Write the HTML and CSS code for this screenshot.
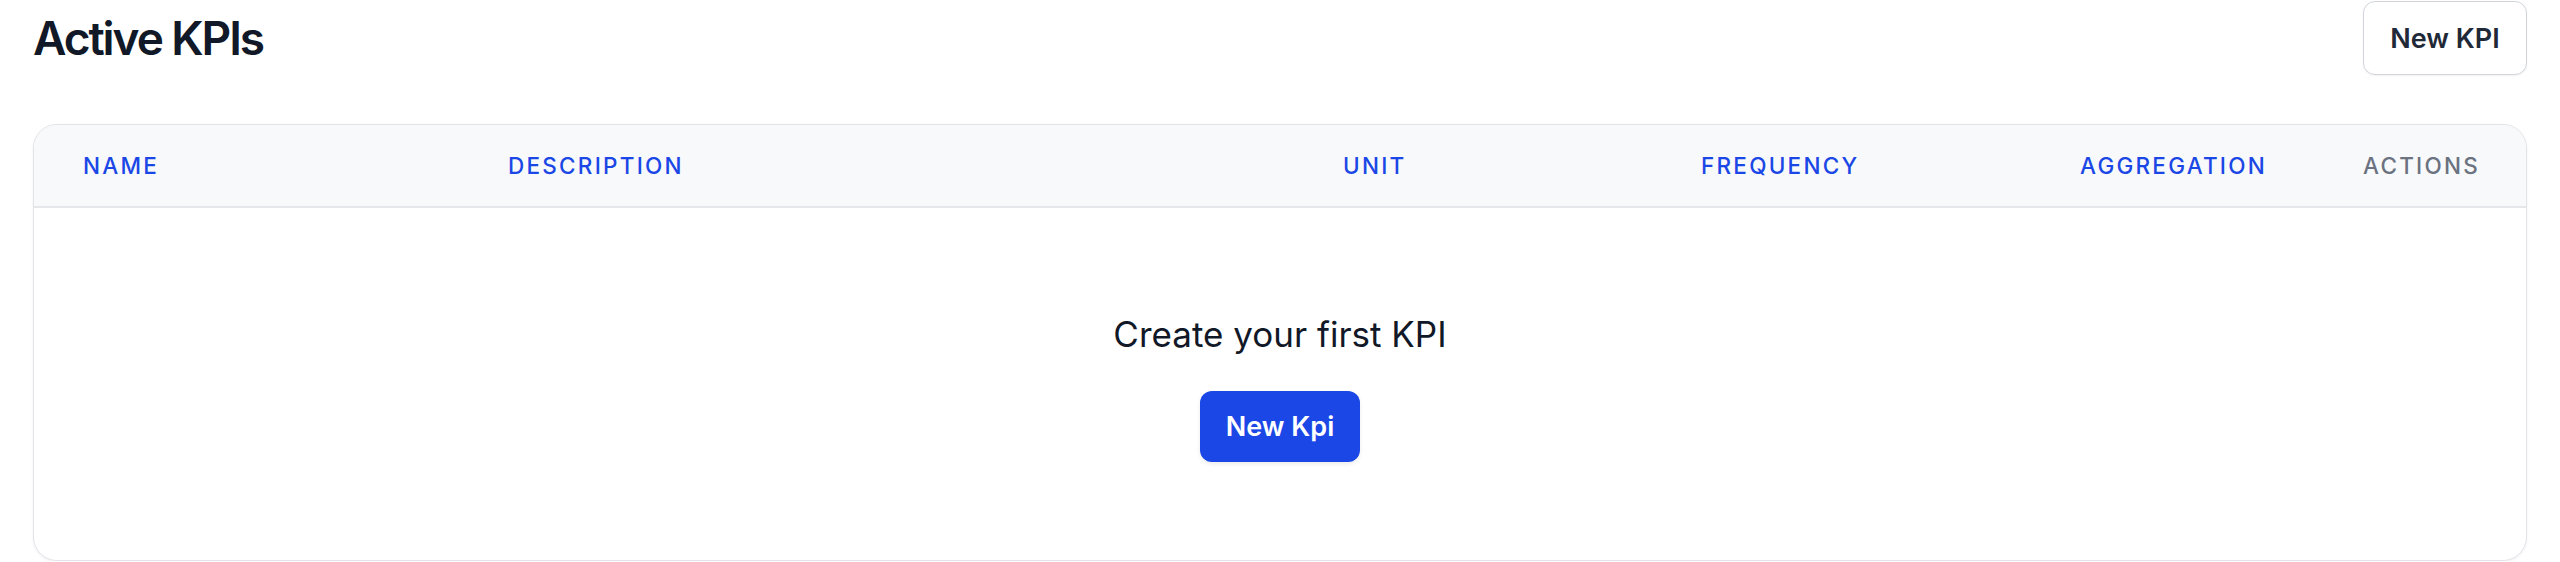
FILE: index.html
```html
<!DOCTYPE html>
<html lang="en">
<head>
<meta charset="utf-8">
<title>Active KPIs</title>
<link rel="stylesheet" href="styles.css">
</head>
<body>
<main class="page">
  <header class="topbar">
    <h1 class="title">Active KPIs</h1>
    <button class="btn-outline" type="button">New KPI</button>
  </header>
  <section class="card">
    <div class="thead">
      <div class="th">Name</div>
      <div class="th">Description</div>
      <div class="th">Unit</div>
      <div class="th">Frequency</div>
      <div class="th">Aggregation</div>
      <div class="th th-muted">Actions</div>
    </div>
    <div class="empty">
      <p class="empty-text">Create your first KPI</p>
      <button class="btn-primary" type="button">New Kpi</button>
    </div>
  </section>
</main>
</body>
</html>
```

FILE: styles.css
```css
* { box-sizing: border-box; }
html, body { margin: 0; padding: 0; background: #ffffff; }
body {
  font-family: Inter, "Noto Sans", "Liberation Sans", sans-serif;
  color: #111827;
}
.page {
  padding: 1px 33px 0 33px;
}
.topbar {
  display: flex;
  align-items: center;
  justify-content: space-between;
  height: 74px;
}
.title {
  margin: 0;
  font-size: 46px;
  line-height: 58px;
  font-weight: 600;
  letter-spacing: -0.045em;
  color: #111827;
}
.btn-outline {
  height: 74px;
  width: 164px;
  padding: 0;
  border: 1.5px solid #d1d5db;
  border-radius: 12px;
  background: #ffffff;
  box-shadow: 0 1px 2px rgba(0,0,0,0.05);
  font-family: inherit;
  font-size: 27px;
  font-weight: 600;
  color: #1f2937;
}
.card {
  margin-top: 49px;
  border: 1px solid #e2e4e9;
  border-radius: 24px;
  overflow: hidden;
  background: #ffffff;
  box-shadow: 0 1px 3px rgba(0,0,0,0.06);
  height: 437px;
}
.thead {
  display: grid;
  grid-template-columns: 425px 835px 358px 379px 283px auto;
  align-items: center;
  height: 83px;
  padding-left: 49px;
  background: #f8f9fb;
  border-bottom: 2px solid #e5e7eb;
}
.th {
  font-size: 22.5px;
  font-weight: 500;
  letter-spacing: 0.1em;
  text-transform: uppercase;
  color: #1a47e5;
}
.th-muted { color: #6b7280; }
.empty {
  display: flex;
  flex-direction: column;
  align-items: center;
  padding-top: 102px;
}
.empty-text {
  margin: 0;
  font-size: 35px;
  line-height: 49px;
  font-weight: 400;
  color: #111827;
}
.btn-primary {
  margin-top: 32px;
  height: 71px;
  width: 160px;
  padding: 0;
  border: 0;
  border-radius: 12px;
  background: #1a47e5;
  box-shadow: 0 2px 4px rgba(0,0,0,0.08);
  font-family: inherit;
  font-size: 27px;
  font-weight: 600;
  color: #ffffff;
}
```
